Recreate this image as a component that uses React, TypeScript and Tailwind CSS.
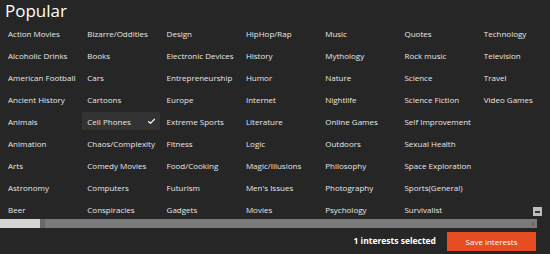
import { Check } from 'lucide-react';

const topics = [
  'Action Movies', 'Alcoholic Drinks', 'American Football', 'Ancient History', 'Animals', 'Animation', 'Arts', 'Astronomy', 'Beer',
  'Bizarre/Oddities', 'Books', 'Cars', 'Cartoons', 'Cell Phones', 'Chaos/Complexity', 'Comedy Movies', 'Computers', 'Conspiracies',
  'Design', 'Electronic Devices', 'Entrepreneurship', 'Europe', 'Extreme Sports', 'Fitness', 'Food/Cooking', 'Futurism', 'Gadgets',
  'HipHop/Rap', 'History', 'Humor', 'Internet', 'Literature', 'Logic', 'Magic/Illusions', "Men's Issues", 'Movies',
  'Music', 'Mythology', 'Nature', 'Nightlife', 'Online Games', 'Outdoors', 'Philosophy', 'Photography', 'Psychology',
  'Quotes', 'Rock music', 'Science', 'Science Fiction', 'Self Improvement', 'Sexual Health', 'Space Exploration', 'Sports(General)', 'Survivalist',
  'Technology', 'Television', 'Travel', 'Video Games',
];

const selected = new Set(['Cell Phones']);

export default function App() {
  return (
    <div className="relative h-[254px] w-[550px] overflow-hidden bg-[#262626] font-['Open_Sans',sans-serif] text-[#e6e6e6]">
      <h1 className="h-[24px] pl-[5px] pt-[1px] text-[17px] leading-[20px] text-white">Popular</h1>

      <div className="ml-[3px] grid grid-flow-col grid-cols-[repeat(7,78px)] grid-rows-[repeat(9,18px)] gap-x-[1.3px] gap-y-[4px]">
        {topics.map((t) => {
          const on = selected.has(t);
          return (
            <div
              key={t}
              className={`flex items-center justify-between pl-[5px] pr-[4px] pt-[1px] text-[8px] ${on ? 'bg-[#333333]' : ''}`}
            >
              <span className="whitespace-nowrap">{t}</span>
              {on ? <Check className="size-[9px] text-white" strokeWidth={3} /> : null}
            </div>
          );
        })}
      </div>

      {/* horizontal scrollbar */}
      <div className="mt-[1px] flex h-[9px] w-[537px] bg-[#7a7a7a]">
        <div className="w-[40px] bg-[#d4d4d4]" />
        <div className="w-[5px] bg-[#6a6a6a]" />
        <div className="flex-1" />
        <div className="flex w-[8px] items-center justify-center text-[7px] leading-none text-[#333]">›</div>
      </div>
      <div className="absolute left-[533px] top-[207px] flex size-[9px] items-center justify-center bg-[#bdbdbd]">
        <div className="h-[2px] w-[5px] bg-[#333]" />
      </div>

      <div className="mt-[4px] flex items-center justify-end pr-[14px]">
        <span className="mr-[11px] text-[8.5px] font-bold text-white">1 interests selected</span>
        <button className="h-[19px] w-[89px] bg-[#e84c22] text-[8px] text-white">Save interests</button>
      </div>
    </div>
  );
}
